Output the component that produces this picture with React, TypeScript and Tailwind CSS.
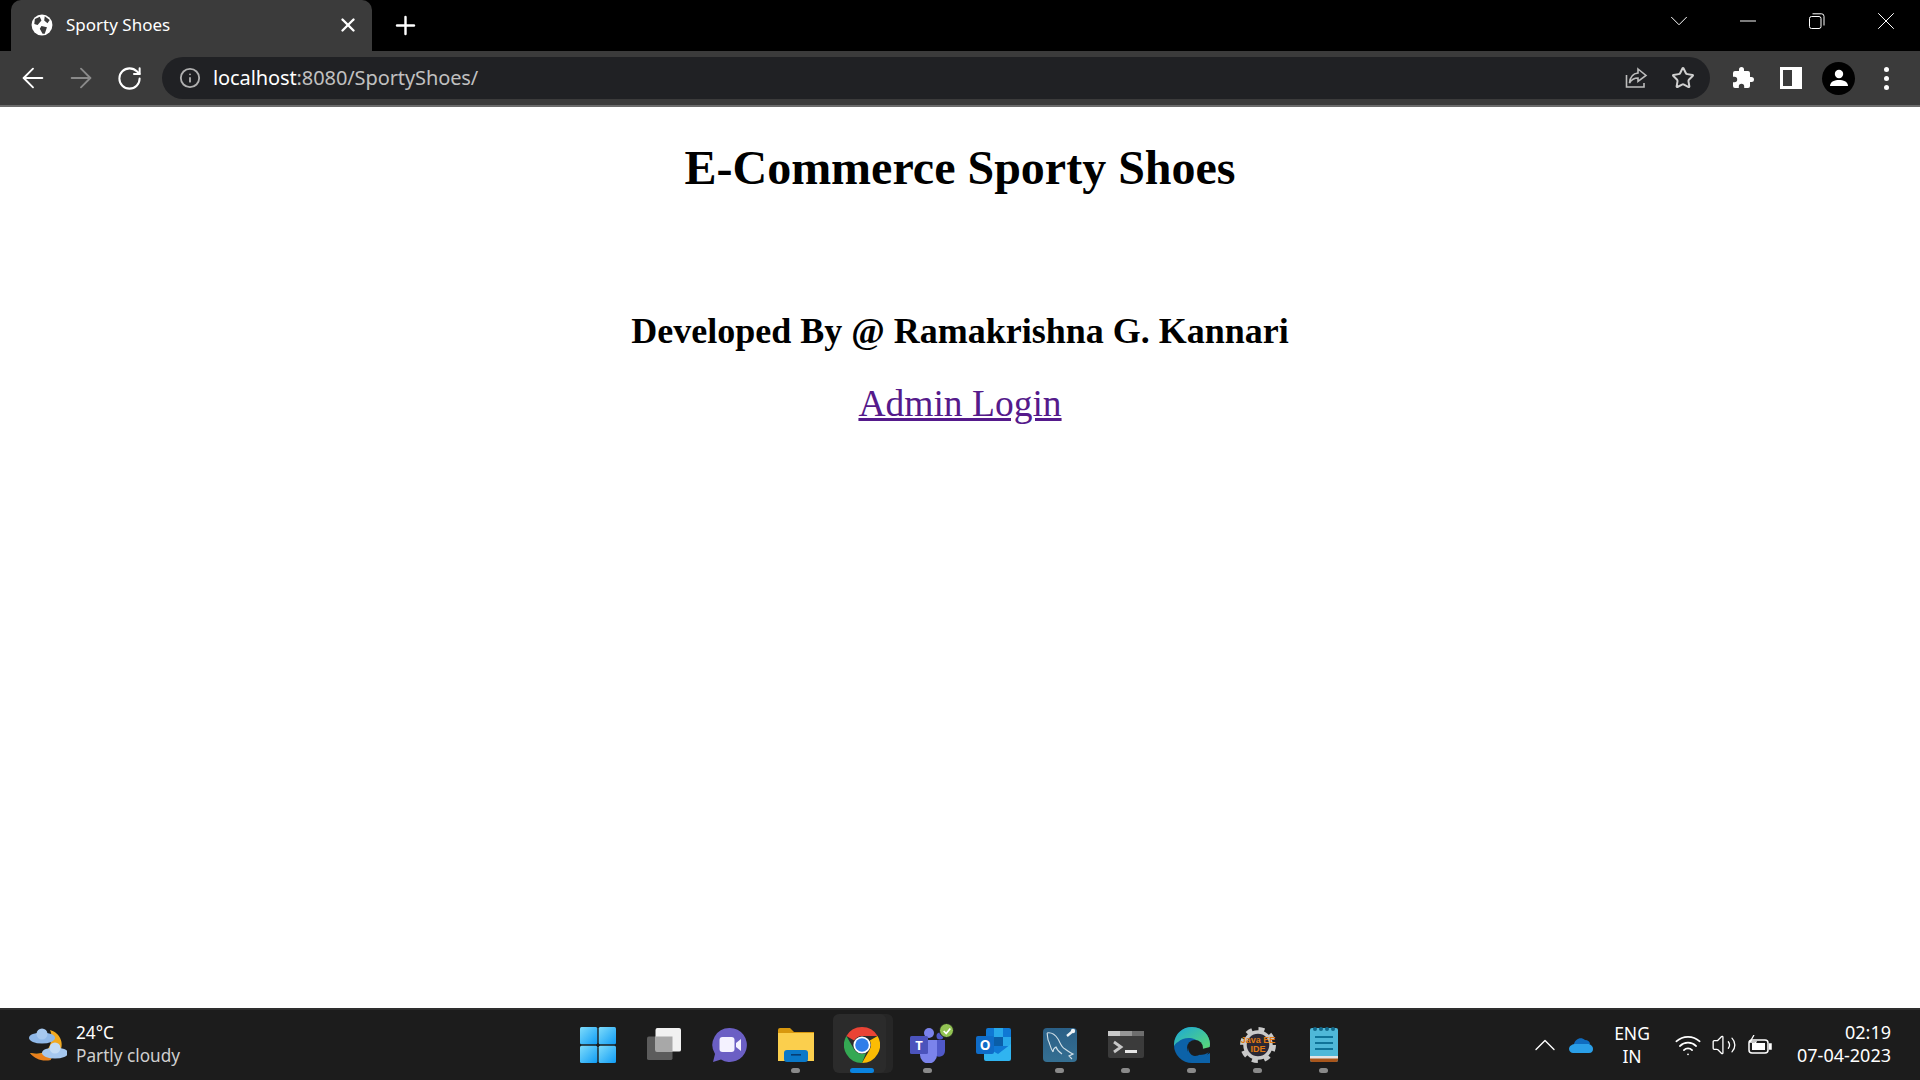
import { ArrowLeft, ArrowRight, ChevronDown, ChevronUp, Info, Minus, Plus, RotateCw, Star, Volume2, Wifi, X } from 'lucide-react';

function Globe() {
  return (
    <svg viewBox="0 0 20 20" className="w-[22px] h-[22px]">
      <circle cx="10" cy="10" r="9.500" fill="#ffffff" />
      <path d="M3.500 4.500 L8 2.500 L9.500 6 L6 10 L3 9 Z M9.500 11 L14.500 12 L12.500 18 L10.500 18 L8 13.500 Z M12.500 2 L17 5.500 L15 8.500 L12 6 Z" fill="#3b3b3b" />
    </svg>
  );
}

function ShareIcon() {
  return (
    <svg viewBox="0 0 24 24" fill="none" stroke="#bdbdbd" strokeWidth="1.6" className="w-[24px] h-[24px]">
      <path d="M2.500 9 V21 H20 V17" />
      <path d="M14 3 L22 9.500 L14 15.500 V12 C10 12 7.500 13.500 5.500 17 C6 11.500 9 7.500 14 7 Z" />
    </svg>
  );
}

function Puzzle() {
  return (
    <svg viewBox="0 0 24 24" fill="#ffffff" className="w-[24px] h-[24px]">
      <path d="M20.500 11H19V7a2 2 0 0 0-2-2h-4V3.500a2.500 2.500 0 0 0-5 0V5H4a2 2 0 0 0-2 2v3.800h1.500a2.700 2.700 0 0 1 0 5.400H2V20a2 2 0 0 0 2 2h3.800v-1.500a2.700 2.700 0 0 1 5.400 0V22H17a2 2 0 0 0 2-2v-4h1.500a2.500 2.500 0 0 0 0-5z" />
    </svg>
  );
}

function SidePanel() {
  return <div className="w-[22px] h-[22px] bg-white border-[3px] border-white flex"><div className="w-[9px] bg-[#3b3b3b]" /></div>;
}

function Profile() {
  return (
    <div className="w-[33px] h-[33px] rounded-full bg-black flex items-center justify-center">
      <svg viewBox="0 0 24 24" fill="#ffffff" className="w-[24px] h-[24px]">
        <circle cx="12" cy="8" r="4.200" />
        <path d="M3 20 C3 15.500 8 14 12 14 C16 14 21 15.500 21 20 Z" />
      </svg>
    </div>
  );
}

function RestoreIcon() {
  return (
    <svg viewBox="0 0 16 16" fill="none" stroke="#ffffff" strokeWidth="1" className="w-[16px] h-[16px]">
      <rect x="0.500" y="3.500" width="11.500" height="12" rx="2" />
      <path d="M3.500 0.800 H12.500 A2.500 2.500 0 0 1 15 3.300 V12.500" />
    </svg>
  );
}

function Weather() {
  return (
    <svg viewBox="0 0 40 36" className="w-[40px] h-[36px]">
      <path d="M23 3 C34 6 38 18 32 26 C26 34 12 35 3 26 C12 28 20 26 23 18 C25 12 25 8 23 3 Z" fill="#f2a91f" />
      <path d="M3 26 C12 28 18 27 22 22 L24 33 C15 35 8 32 3 26 Z" fill="#e8801c" />
      <ellipse cx="15" cy="11" rx="13" ry="5.500" fill="#8fb8e8" />
      <circle cx="15" cy="7" r="5.500" fill="#a6c8ef" />
      <ellipse cx="28" cy="26" rx="13" ry="5.500" fill="#a6c8ef" />
      <circle cx="28" cy="21" r="5.500" fill="#c4dcf5" />
    </svg>
  );
}

function StartIcon() {
  return (
    <svg viewBox="0 0 36 36" className="w-[36px] h-[36px]">
      <defs>
        <linearGradient id="win" x1="0" y1="0" x2="1" y2="1">
          <stop offset="0" stopColor="#7fdcfb" />
          <stop offset="1" stopColor="#0f9cf5" />
        </linearGradient>
      </defs>
      <rect x="0" y="0" width="17.300" height="17.300" rx="1.500" fill="url(#win)" />
      <rect x="18.700" y="0" width="17.300" height="17.300" rx="1.500" fill="url(#win)" />
      <rect x="0" y="18.700" width="17.300" height="17.300" rx="1.500" fill="url(#win)" />
      <rect x="18.700" y="18.700" width="17.300" height="17.300" rx="1.500" fill="url(#win)" />
    </svg>
  );
}

function TaskViewIcon() {
  return (
    <svg viewBox="0 0 36 36" className="w-[36px] h-[34px]">
      <rect x="0" y="9" width="27" height="25" rx="2" fill="#5c5c5c" />
      <rect x="9" y="0" width="27" height="25" rx="2" fill="#f1f1f1" />
      <rect x="9" y="9" width="18" height="16" fill="#a8a8a8" />
    </svg>
  );
}

function MeetIcon() {
  return (
    <svg viewBox="0 0 36 36" className="w-[36px] h-[36px]">
      <path d="M18 1 A17 17 0 1 1 9 32.500 L1 35 L3 27 A17 17 0 0 1 18 1 Z" fill="#6b5fc4" />
      <rect x="7.500" y="10" width="15" height="15" rx="3" fill="#f4f2ff" />
      <path d="M24 16 L29 12 V24 L24 20 Z" fill="#f4f2ff" />
    </svg>
  );
}

function FolderIcon() {
  return (
    <svg viewBox="0 0 36 34" className="w-[36px] h-[34px]">
      <path d="M0 2 A2 2 0 0 1 2 0 H12 L16 4 H36 V32 H0 Z" fill="#d8980e" />
      <rect x="0" y="5" width="36" height="28" fill="#fbcf4d" />
      <rect x="6" y="22" width="24" height="12" rx="3" fill="#0a78c8" />
      <rect x="13" y="26" width="10" height="1.600" fill="#063d74" />
    </svg>
  );
}

function ChromeIcon() {
  return (
    <svg viewBox="0 0 36 36" className="w-[36px] h-[36px]">
      <path d="M18 0 A18 18 0 0 1 33.600 9 H18 A9 9 0 0 0 10.200 13.500 L2.400 9 A18 18 0 0 1 18 0 Z" fill="#ea4335" />
      <path d="M33.600 9 A18 18 0 0 1 18 36 L25.800 22.500 A9 9 0 0 0 25.800 13.500 Z" fill="#fbbc04" />
      <path d="M18 36 A18 18 0 0 1 2.400 9 L10.200 22.500 A9 9 0 0 0 22 26 Z" fill="#34a853" />
      <circle cx="18" cy="18" r="8.600" fill="#ffffff" />
      <circle cx="18" cy="18" r="6.800" fill="#2f7de9" />
    </svg>
  );
}

function TeamsIcon() {
  return (
    <div className="relative w-[36px] h-[36px]">
      <svg viewBox="0 0 36 36" className="w-[36px] h-[36px]">
        <circle cx="19" cy="6" r="5" fill="#7b83eb" />
        <circle cx="30" cy="9" r="3.500" fill="#5059c9" />
        <path d="M24 13 H35 V24 A6 6 0 0 1 26 29 Z" fill="#5059c9" />
        <path d="M10 13 H27 V28 A8.500 8.500 0 0 1 10 28 Z" fill="#7b83eb" />
        <rect x="0" y="9" width="18" height="18" rx="1.500" fill="#4b53bc" />
        <text x="9" y="23" textAnchor="middle" fontSize="13" fontWeight="700" fill="#ffffff" fontFamily="'Open Sans', sans-serif">T</text>
      </svg>
      <div className="absolute right-[-8px] top-[-4px] w-[15px] h-[15px] rounded-full bg-[#92c353] flex items-center justify-center border border-[#1c1c1c]">
        <svg viewBox="0 0 12 12" fill="none" stroke="#ffffff" strokeWidth="2" className="w-[10px] h-[10px]"><path d="M2 6 L5 9 L10 3" /></svg>
      </div>
    </div>
  );
}

function OutlookIcon() {
  return (
    <svg viewBox="0 0 36 36" className="w-[36px] h-[36px]">
      <rect x="10" y="1" width="25" height="31" rx="2" fill="#0f78d4" />
      <rect x="18" y="1" width="9" height="9" fill="#28a8ea" />
      <rect x="27" y="10" width="8" height="9" fill="#28a8ea" />
      <rect x="18" y="10" width="9" height="9" fill="#0a5ea8" />
      <path d="M8 19 L22 27 L35 17 V32 A2 2 0 0 1 33 34 H10 A2 2 0 0 1 8 32 Z" fill="#30b4f0" />
      <rect x="0" y="9" width="18" height="18" rx="2" fill="#0f6cc8" />
      <text x="9" y="23" textAnchor="middle" fontSize="13.500" fontWeight="700" fill="#ffffff" fontFamily="'Open Sans', sans-serif">O</text>
    </svg>
  );
}

function WorkbenchIcon() {
  return (
    <svg viewBox="0 0 36 36" className="w-[36px] h-[36px]">
      <defs>
        <linearGradient id="bench" x1="0" y1="0" x2="0" y2="1">
          <stop offset="0" stopColor="#2a5f86" />
          <stop offset="1" stopColor="#356f92" />
        </linearGradient>
      </defs>
      <rect width="34" height="34" x="1" y="1" rx="4" fill="url(#bench)" />
      <path d="M5 6 C10 5 14 9 16 12 C18 15 19 20 23 22 C26 24 28 26 31 27 L27 29 L30 32 M5 6 C6 9 5 12 7 15 C8 18 9 22 11 25 M11 25 C11 22 12 21 14 20 C15 23 17 25 20 27" fill="none" stroke="#d2e0e8" strokeWidth="1.100" />
      <path d="M25 9 L31 4" stroke="#eef3f6" strokeWidth="2.400" />
      <circle cx="31" cy="4" r="2.200" fill="#eef3f6" />
    </svg>
  );
}

function TerminalIcon() {
  return (
    <svg viewBox="0 0 36 28" className="w-[36px] h-[28px]">
      <rect width="36" height="27" rx="2" fill="#3b3b3b" />
      <rect width="12" height="5" fill="#c8c8c8" />
      <rect x="12" width="12" height="5" fill="#969696" />
      <rect x="24" width="12" height="5" fill="#6e6e6e" />
      <path d="M6 11 L13 16 L6 21" fill="none" stroke="#c8c8c8" strokeWidth="2.800" />
      <rect x="17" y="19" width="12" height="3" fill="#e6e6e6" />
    </svg>
  );
}

function EdgeIcon() {
  return (
    <svg viewBox="0 0 36 36" className="w-[36px] h-[36px]">
      <defs>
        <linearGradient id="edge" x1="0" y1="0" x2="1" y2="1">
          <stop offset="0" stopColor="#1ba7d8" />
          <stop offset="1" stopColor="#5fdc6e" />
        </linearGradient>
      </defs>
      <circle cx="18" cy="18" r="18" fill="#0c62a8" />
      <path d="M0 17 C1 6 9 0 18 0 C29 0 36 9 36 17 C36 23 31 25 27 24 C23 23 27 20 25 16 C22 10 10 9 4 15 C2 16 1 17 0 19 Z" fill="url(#edge)" />
      <circle cx="21" cy="21" r="8" fill="#1c1c1c" />
      <path d="M14 20 C14 29 24 34 36 26 L36 36 H18 C14 32 13 26 14 20 Z" fill="#0c62a8" />
      <path d="M36 24 C33 27 29 28 25 28 L28 22 L36 20 Z" fill="#1c1c1c" />
    </svg>
  );
}

function EclipseIcon() {
  return (
    <svg viewBox="0 0 36 36" className="w-[36px] h-[36px]">
      <circle cx="18" cy="18" r="16" fill="none" stroke="#c9c9c9" strokeWidth="4" strokeDasharray="6 6.570" />
      <circle cx="18" cy="18" r="13" fill="#2a2833" stroke="#c9c9c9" strokeWidth="3.500" />
      <text x="18" y="15.500" textAnchor="middle" fontSize="9" fontWeight="700" fill="#e07b12" fontFamily="'Liberation Sans', sans-serif">Java EE</text>
      <text x="18" y="25" textAnchor="middle" fontSize="9" fontWeight="700" fill="#e07b12" fontFamily="'Liberation Sans', sans-serif">IDE</text>
    </svg>
  );
}

function NotepadIcon() {
  return (
    <svg viewBox="0 0 28 36" className="w-[28px] h-[36px]">
      <rect y="1" width="28" height="34" rx="2" fill="#4fb8d8" />
      <path d="M0 30 H28 V33 A2 2 0 0 1 26 35 H2 A2 2 0 0 1 0 33 Z" fill="#a8561c" />
      <rect y="29" width="28" height="2.500" fill="#e4e4e4" />
      <circle cx="5" cy="2" r="2" fill="#12688a" />
      <circle cx="11" cy="2" r="2" fill="#12688a" />
      <circle cx="17" cy="2" r="2" fill="#12688a" />
      <circle cx="23" cy="2" r="2" fill="#12688a" />
      <rect x="5" y="9" width="18" height="2" fill="#0f7398" />
      <rect x="5" y="15" width="18" height="2" fill="#0f7398" />
      <rect x="5" y="21" width="18" height="2" fill="#0f7398" />
    </svg>
  );
}

function OneDrive() {
  return (
    <svg viewBox="0 0 24 16" className="w-[24px] h-[16px]">
      <path d="M5 7 C6 2 12 -1 16 3 C19 3 21 5 21 7 Z" fill="#0f6cc0" />
      <path d="M0 12 C0 9 3 7 7 7 H20 C23 8 24 10 24 12 C24 14 23 16 20 16 H4 C2 16 0 14 0 12 Z" fill="#2a9fe8" />
    </svg>
  );
}

function BatteryCharging() {
  return (
    <svg viewBox="0 0 24 20" fill="none" stroke="#ffffff" strokeWidth="1.500" className="w-[24px] h-[20px]">
      <rect x="1" y="5" width="19" height="13" rx="3" />
      <rect x="4" y="8" width="13" height="7" fill="#ffffff" stroke="none" />
      <path d="M21 9 H23 V14 H21" fill="#ffffff" />
      <path d="M6 0 L2 7 H8 L5 12" strokeWidth="1.300" />
    </svg>
  );
}

const apps = [
  { id: 'start', icon: StartIcon, dot: false },
  { id: 'taskview', icon: TaskViewIcon, dot: false },
  { id: 'meet', icon: MeetIcon, dot: false },
  { id: 'files', icon: FolderIcon, dot: true },
  { id: 'chrome', icon: ChromeIcon, dot: false, active: true },
  { id: 'teams', icon: TeamsIcon, dot: true },
  { id: 'outlook', icon: OutlookIcon, dot: false },
  { id: 'workbench', icon: WorkbenchIcon, dot: true },
  { id: 'terminal', icon: TerminalIcon, dot: true },
  { id: 'edge', icon: EdgeIcon, dot: true },
  { id: 'eclipse', icon: EclipseIcon, dot: true },
  { id: 'notepad', icon: NotepadIcon, dot: true },
];

export default function App() {
  return (
    <div className="w-[1920px] h-[1080px] flex flex-col overflow-hidden bg-white font-['Open_Sans',sans-serif]">
      {/* Tab strip */}
      <div className="h-[51px] bg-black flex items-end text-white shrink-0">
        <div className="ml-[11px] w-[361px] h-[51px] bg-[#3b3b3b] rounded-t-[10px] flex items-center pl-[20px] pr-[13px] pb-[1px]">
          <Globe />
          <span className="ml-[13px] text-[17px] flex-1 font-['Noto_Sans',sans-serif]">Sporty Shoes</span>
          <X className="w-[22px] h-[22px]" strokeWidth={2.6} />
        </div>
        <div className="w-[66px] h-[51px] flex items-center justify-center">
          <Plus className="w-[29px] h-[29px]" strokeWidth={2} />
        </div>
        <div className="flex-1" />
        <div className="h-[42px] self-start flex items-center">
          <div className="w-[70px] flex justify-center"><ChevronDown className="w-[30px] h-[30px]" strokeWidth={0.8} /></div>
          <div className="w-[68px] flex justify-center"><Minus className="w-[26px] h-[26px]" strokeWidth={0.9} /></div>
          <div className="w-[70px] flex justify-center"><RestoreIcon /></div>
          <div className="w-[68px] flex justify-center"><X className="w-[30px] h-[30px]" strokeWidth={0.8} /></div>
        </div>
      </div>

      {/* Toolbar */}
      <div className="h-[56px] bg-[#3b3b3b] border-b-[2px] border-[#6b6b6b] flex items-center shrink-0">
        <div className="w-[162px] flex items-center pl-[9px] text-white">
          <div className="w-[48px] flex justify-center"><ArrowLeft className="w-[32px] h-[32px]" strokeWidth={1.4} /></div>
          <div className="w-[48px] flex justify-center"><ArrowRight className="w-[32px] h-[32px] text-[#8a8a8a]" strokeWidth={1.4} /></div>
          <div className="w-[48px] flex justify-center"><RotateCw className="w-[27px] h-[27px]" strokeWidth={1.8} /></div>
        </div>
        <div className="w-[1548px] h-[42px] rounded-full bg-[#202124] flex items-center pl-[17px] pr-[15px]">
          <Info className="w-[22px] h-[22px] text-[#b0b0b0]" strokeWidth={2} />
          <span className="ml-[12px] text-[20px] text-[#c0c0c0] flex-1 font-['Noto_Sans',sans-serif] tracking-[-0.1px]">
            <span className="text-white">localhost</span>:8080/SportyShoes/
          </span>
          <div className="flex items-center gap-[23px]">
            <ShareIcon />
            <Star className="w-[24px] h-[24px] text-[#d0d0d0]" strokeWidth={2} />
          </div>
        </div>
        <div className="flex items-center pl-[21px]">
          <Puzzle />
          <div className="ml-[25px]"><SidePanel /></div>
          <div className="ml-[20px]"><Profile /></div>
          <div className="ml-[29px] flex flex-col gap-[4px]">
            <div className="w-[5px] h-[5px] rounded-full bg-white" />
            <div className="w-[5px] h-[5px] rounded-full bg-white" />
            <div className="w-[5px] h-[5px] rounded-full bg-white" />
          </div>
        </div>
      </div>

      {/* Page */}
      <main className="flex-1 bg-white text-black text-center font-['Liberation_Serif',serif]">
        <h1 className="mt-[33px] text-[48px] leading-[55px] font-bold">E-Commerce Sporty Shoes</h1>
        <h2 className="mt-[116px] text-[36px] leading-[41px] font-bold">Developed By @ Ramakrishna G. Kannari</h2>
        <div className="mt-[29px]">
          <a href="#" className="text-[37.5px] leading-[46px] text-[#551a8b] underline">Admin Login</a>
        </div>
      </main>

      {/* Taskbar */}
      <div className="h-[72px] bg-[#1c1c1c] border-t-[2px] border-[#2e2e2e] flex items-center text-white shrink-0 font-['Noto_Sans',sans-serif]">
        <div className="flex-1 flex items-center pl-[27px]">
          <Weather />
          <div className="ml-[9px] text-[17.2px] leading-[23px] pb-[3px]">
            <div>24°C</div>
            <div className="text-[#cfcfcf]">Partly cloudy</div>
          </div>
        </div>
        <div className="ml-[4px] flex items-center h-full">
          {apps.map((app) => {
            const Icon = app.icon;
            return (
              <div key={app.id} className="relative w-[66px] h-full flex items-center justify-center">
                {app.active && (
                  <div className="absolute left-[4px] top-[4px] w-[53px] h-[59px] rounded-[6px] bg-[#2b2b2b] shadow-[7px_0_0_#262626]" />
                )}
                <div className="relative"><Icon /></div>
                {app.dot && <div className="absolute bottom-[7px] left-[28px] w-[9px] h-[5px] rounded-full bg-[#8a8a8a]" />}
                {app.active && <div className="absolute bottom-[7px] left-[21px] w-[24px] h-[5px] rounded-full bg-[#0a84e0]" />}
              </div>
            );
          })}
        </div>
        <div className="flex-1 flex items-center justify-end pr-[29px]">
          <ChevronUp className="w-[36px] h-[36px]" strokeWidth={0.9} />
          <div className="ml-[6px]"><OneDrive /></div>
          <div className="ml-[15px] w-[48px] text-center text-[17.5px] leading-[23px]">
            <div>ENG</div>
            <div>IN</div>
          </div>
          <div className="ml-[18px] flex items-center">
            <Wifi className="w-[28px] h-[28px]" strokeWidth={1.5} />
            <Volume2 className="ml-[9px] w-[26px] h-[26px]" strokeWidth={1.2} />
            <div className="ml-[11px]"><BatteryCharging /></div>
          </div>
          <div className="ml-[25px] text-[18px] leading-[23px] text-right pb-[3px]">
            <div>02:19</div>
            <div>07-04-2023</div>
          </div>
        </div>
      </div>
    </div>
  );
}
